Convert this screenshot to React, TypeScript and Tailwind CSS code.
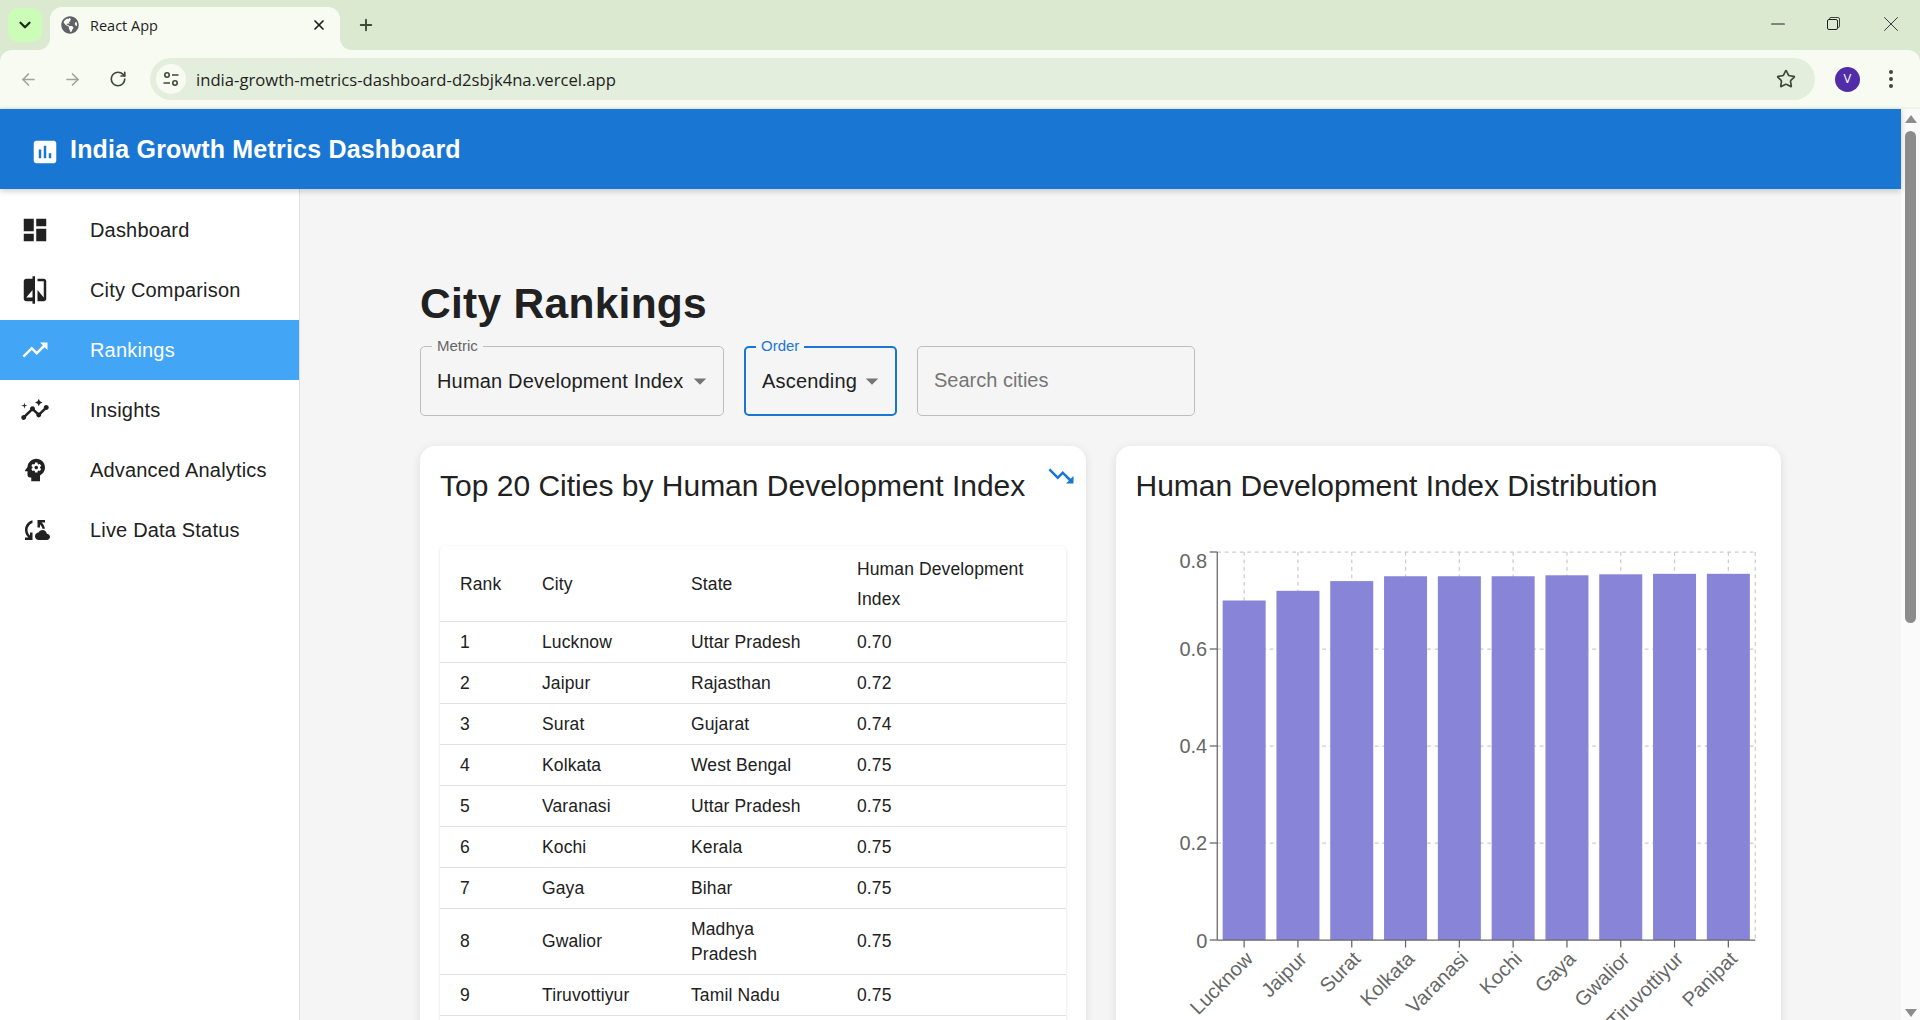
// City Rankings page inside the browser window frame
import { ArrowLeft, ArrowRight, ChevronDown, Minus, Plus, RotateCw, Star, X } from "lucide-react";
import { FaGlobeAmericas } from "react-icons/fa";

const navItems = [
  {
    label: "Dashboard",
    paths: ["M3 13h8V3H3v10zm0 8h8v-6H3v6zm10 0h8V11h-8v10zm0-18v6h8V3h-8z"],
  },
  {
    label: "City Comparison",
    paths: ["M10 3H5c-1.1 0-2 .9-2 2v14c0 1.1.9 2 2 2h5v2h2V1h-2v2zm0 15H5l5-6v6zm9-15h-5v2h5v13l-5-6v9h5c1.1 0 2-.9 2-2V5c0-1.1-.9-2-2-2z"],
  },
  {
    label: "Rankings",
    active: true,
    paths: ["m16 6 2.29 2.29-4.88 4.88-4-4L2 16.59 3.41 18l6-6 4 4 6.3-6.29L22 12V6z"],
  },
  {
    label: "Insights",
    paths: [
      "M21 8c-1.45 0-2.26 1.44-1.93 2.51l-3.55 3.56c-.3-.09-.74-.09-1.04 0l-2.55-2.55C12.27 10.45 11.46 9 10 9c-1.45 0-2.27 1.44-1.93 2.52l-4.56 4.55C2.44 15.74 1 16.55 1 18c0 1.1.9 2 2 2 1.45 0 2.26-1.44 1.93-2.51l4.55-4.56c.3.09.74.09 1.04 0l2.55 2.55C12.73 16.55 13.54 18 15 18c1.45 0 2.27-1.44 1.93-2.52l3.56-3.55c1.07.33 2.51-.48 2.51-1.93 0-1.1-.9-2-2-2z",
      "m15 9 .94-2.07L18 6l-2.06-.93L15 3l-.92 2.07L12 6l2.08.93zM3.5 11 4 9l2-.5L4 8l-.5-2L3 8l-2 .5L3 9z",
    ],
  },
  {
    label: "Advanced Analytics",
    paths: [
      "M13 8.57c-.79 0-1.43.64-1.43 1.43s.64 1.43 1.43 1.43 1.43-.64 1.43-1.43-.64-1.43-1.43-1.43z",
      "M13 3C9.25 3 6.2 5.94 6.02 9.64L4.1 12.2c-.25.33-.01.8.4.8H6v3c0 1.1.9 2 2 2h1v3h7v-4.68c2.36-1.12 4-3.53 4-6.32 0-3.87-3.13-7-7-7zm3 7c0 .13-.01.26-.02.39l.83.66c.08.06.1.16.05.25l-.8 1.39c-.05.09-.16.12-.24.09l-.99-.4c-.21.16-.43.29-.67.39L14 13.83c-.01.1-.1.17-.2.17h-1.6c-.1 0-.18-.07-.2-.17l-.15-1.06c-.25-.1-.47-.23-.68-.39l-.99.4c-.09.03-.2 0-.25-.09l-.8-1.39c-.05-.08-.03-.19.05-.25l.84-.66c-.01-.13-.02-.26-.02-.39s.02-.27.04-.39l-.85-.66c-.08-.06-.1-.16-.05-.26l.8-1.38c.05-.09.15-.12.24-.09l1 .4c.2-.15.43-.29.67-.39L12 6.17c.02-.1.1-.17.2-.17h1.6c.1 0 .18.07.2.17l.15 1.06c.24.1.46.23.67.39l1-.4c.09-.03.2 0 .24.09l.8 1.38c.05.09.03.2-.05.26l-.85.66c.03.12.04.25.04.39z",
    ],
  },
  {
    label: "Live Data Status",
    paths: [
      "M21.5 14.98c-.02 0-.03 0-.05.01C21.2 13.3 19.76 12 18 12c-1.4 0-2.6.83-3.16 2.02C13.26 14.1 12 15.4 12 17c0 1.66 1.34 3 3 3l6.5-.02c1.38 0 2.5-1.12 2.5-2.5s-1.12-2.5-2.5-2.5zM10 4.26v2.09C7.67 7.18 6 9.39 6 12c0 1.77.78 3.34 2 4.44V14h2v6H4v-2h2.73C5.06 16.54 4 14.4 4 12c0-3.73 2.55-6.85 6-7.74zM20 6h-2.73c1.43 1.26 2.41 3.01 2.66 5l-2.02.01C17.68 9.64 16.98 8.45 16 7.56V10h-2V4h6v2z",
    ],
  },
];

const rows = [
  ["1", "Lucknow", "Uttar Pradesh", "0.70"],
  ["2", "Jaipur", "Rajasthan", "0.72"],
  ["3", "Surat", "Gujarat", "0.74"],
  ["4", "Kolkata", "West Bengal", "0.75"],
  ["5", "Varanasi", "Uttar Pradesh", "0.75"],
  ["6", "Kochi", "Kerala", "0.75"],
  ["7", "Gaya", "Bihar", "0.75"],
  ["8", "Gwalior", "Madhya Pradesh", "0.75"],
  ["9", "Tiruvottiyur", "Tamil Nadu", "0.75"],
  ["10", "Panipat", "Haryana", "0.76"],
];

const bars = [
  { city: "Lucknow", value: 0.7 },
  { city: "Jaipur", value: 0.72 },
  { city: "Surat", value: 0.74 },
  { city: "Kolkata", value: 0.75 },
  { city: "Varanasi", value: 0.75 },
  { city: "Kochi", value: 0.75 },
  { city: "Gaya", value: 0.752 },
  { city: "Gwalior", value: 0.754 },
  { city: "Tiruvottiyur", value: 0.755 },
  { city: "Panipat", value: 0.755 },
];

function MuiIcon({ paths, className }: { paths: string[]; className?: string }) {
  return (
    <svg viewBox="0 0 24 24" fill="currentColor" className={className}>
      {paths.map((d) => (
        <path key={d} d={d} />
      ))}
    </svg>
  );
}

function BrowserFrame() {
  return (
    <div className="h-[109px] shrink-0 bg-[#dbe9d0] font-['Open_Sans',sans-serif] text-[#1f1f1f]">
      {/* Tab strip */}
      <div className="flex h-[50px] items-start">
        <div className="ml-2 mt-2 flex h-[34px] w-[34px] items-center justify-center rounded-[10px] bg-[#ccfdb8]">
          <ChevronDown className="h-[18px] w-[18px] text-[#1f2a1a]" strokeWidth={3} />
        </div>
        <div className="relative ml-2 mt-[7px] flex h-[43px] w-[290px] items-center rounded-t-[12px] bg-[#f8fbf2] pb-[7px] pl-[11px] pr-[13px]">
          <svg viewBox="0 0 12 12" className="absolute bottom-0 left-[-12px] h-3 w-3 text-[#f8fbf2]" fill="currentColor">
            <path d="M12 0v12H0C7 12 12 7 12 0z" />
          </svg>
          <svg viewBox="0 0 12 12" className="absolute bottom-0 right-[-12px] h-3 w-3 text-[#f8fbf2]" fill="currentColor">
            <path d="M0 0v12h12C5 12 0 7 0 0z" />
          </svg>
          <FaGlobeAmericas className="h-[18px] w-[18px] text-[#5f6368]" />
          <span className="ml-[11px] flex-1 pt-[2px] text-[14.5px] leading-none">React App</span>
          <X className="h-[16px] w-[16px]" strokeWidth={2.6} />
        </div>
        <Plus className="ml-[17px] mt-[16px] h-[18px] w-[18px] text-[#3c4a36]" strokeWidth={2.5} />
        <div className="ml-auto flex h-[47px] items-center">
          <Minus className="h-[22px] w-[22px] text-[#222]" strokeWidth={1.1} />
          <div className="relative ml-[38px] h-[13px] w-[13px]">
            <div className="absolute right-0 top-0 h-[11px] w-[11px] rounded-[2px] border border-[#444]" />
            <div className="absolute bottom-0 left-0 h-[11px] w-[11px] rounded-[2px] border border-[#222] bg-[#dbe9d0]" />
          </div>
          <X className="ml-[38px] mr-[16px] h-[26px] w-[26px] text-[#333]" strokeWidth={0.9} />
        </div>
      </div>
      {/* Toolbar */}
      <div className="flex h-[57px] items-center rounded-t-[12px] bg-[#f8fbf2] pt-[1px]">
        <ArrowLeft className="ml-[19px] h-[19px] w-[19px] text-[#9ea59a]" strokeWidth={2} />
        <ArrowRight className="ml-[25px] h-[19px] w-[19px] text-[#9ea59a]" strokeWidth={2} />
        <RotateCw className="ml-[27px] h-[18px] w-[18px] text-[#3c4a36]" strokeWidth={2.2} />
        <div className="ml-[23px] flex h-[42px] w-[1665px] items-center rounded-full bg-[#e4eedc] pl-[6px] pr-[19px]">
          <div className="flex h-[30px] w-[30px] items-center justify-center rounded-full bg-[#f8fbf2]">
            <svg viewBox="0 0 18 18" className="h-[18px] w-[18px]" fill="none" stroke="#3c4a36" strokeWidth="1.6">
              <circle cx="5" cy="5" r="2.2" />
              <path d="M10 5h6.5M1.5 13H8" />
              <circle cx="13" cy="13" r="2.2" />
            </svg>
          </div>
          <span className="ml-[10px] flex-1 pt-[2px] text-[16.65px] leading-none">india-growth-metrics-dashboard-d2sbjk4na.vercel.app</span>
          <Star className="h-[20px] w-[20px] text-[#3c4a36]" strokeWidth={2} />
        </div>
        <div className="ml-[20px] flex h-[25px] w-[25px] items-center justify-center rounded-full bg-[#512da8] text-[13px] text-white">V</div>
        <div className="ml-[29px] flex flex-col gap-[3.5px]">
          <span className="h-[3.5px] w-[3.5px] rounded-full bg-[#3c4a36]" />
          <span className="h-[3.5px] w-[3.5px] rounded-full bg-[#3c4a36]" />
          <span className="h-[3.5px] w-[3.5px] rounded-full bg-[#3c4a36]" />
        </div>
      </div>
      <div className="h-[2px] bg-[#f1f3e8]" />
    </div>
  );
}

function Sidebar() {
  return (
    <aside className="w-[300px] shrink-0 border-r border-[#e0e0e0] bg-white pt-[11px]">
      {navItems.map((item) => (
        <div
          key={item.label}
          className={`flex h-[60px] items-center pl-5 ${item.active ? "bg-[#42a5f5] text-white" : "text-[#212121]"}`}
        >
          <MuiIcon paths={item.paths} className="h-[30px] w-[30px]" />
          <span className="ml-[40px] text-[20px] leading-none tracking-[0.18px]">{item.label}</span>
        </div>
      ))}
    </aside>
  );
}

function SelectBox({ label, value, focused, width }: { label: string; value: string; focused?: boolean; width: string }) {
  return (
    <div
      className={`relative flex h-[70px] items-center rounded-[5px] ${width} ${
        focused ? "border-2 border-[#1976d2] pl-[16px]" : "border border-[#bdbdbd] pl-[16px]"
      }`}
    >
      <span
        className={`absolute bg-[#f5f5f5] px-[5px] text-[15px] leading-[17px] ${
          focused ? "left-[10px] top-[-11px] text-[#1976d2]" : "left-[11px] top-[-10px] text-[#666]"
        }`}
      >
        {label}
      </span>
      <span className="text-[20px] leading-none tracking-[0.18px] text-[#212121]">{value}</span>
      <svg viewBox="0 0 24 24" className={`h-[30px] w-[30px] text-[#757575] ${focused ? "" : "ml-[1px]"}`} fill="currentColor">
        <path d="M7 10l5 5 5-5z" />
      </svg>
    </div>
  );
}

function RankTable() {
  return (
    <div className="overflow-hidden rounded-[5px] bg-white shadow-[0_1px_3px_rgba(0,0,0,0.14)]">
      <table className="w-full table-fixed border-collapse text-left text-[17.5px] tracking-[0.12px] text-[#212121]">
        <colgroup>
          <col className="w-[82px]" />
          <col className="w-[149px]" />
          <col className="w-[166px]" />
          <col />
        </colgroup>
        <thead>
          <tr className="border-b border-[#e0e0e0]">
            <th className="px-5 py-[7.5px] font-normal leading-[30px]">Rank</th>
            <th className="px-5 py-[7.5px] font-normal leading-[30px]">City</th>
            <th className="px-5 py-[7.5px] font-normal leading-[30px]">State</th>
            <th className="px-5 py-[7.5px] font-normal leading-[30px]">Human Development Index</th>
          </tr>
        </thead>
        <tbody>
          {rows.map((row) => (
            <tr key={row[0]} className="border-b border-[#e0e0e0]">
              {row.map((cell, i) => (
                <td key={i} className="px-5 py-[7.5px] leading-[25px]">
                  {cell}
                </td>
              ))}
            </tr>
          ))}
        </tbody>
      </table>
    </div>
  );
}

function DistributionChart() {
  const left = 81.25;
  const right = 619.25;
  const top = 6;
  const bottom = 394;
  const band = (right - left) / bars.length;
  const yOf = (v: number) => bottom - (v / 0.8) * (bottom - top);
  const ticks = [0, 0.2, 0.4, 0.6, 0.8];

  return (
    <svg width="625" height="560" className="overflow-visible font-['Liberation_Sans',sans-serif]">
      <g stroke="#ccc" strokeWidth="1.25" strokeDasharray="3.75 3.75">
        {ticks.slice(1).map((t) => (
          <line key={t} x1={left} x2={right} y1={yOf(t)} y2={yOf(t)} />
        ))}
        <line x1={right} x2={right} y1={top} y2={bottom} />
        {bars.map((b, i) => (
          <line key={b.city} x1={left + band * (i + 0.5)} x2={left + band * (i + 0.5)} y1={top} y2={bottom} />
        ))}
      </g>
      {bars.map((b, i) => (
        <rect key={b.city} x={left + band * i + 5.4} y={yOf(b.value)} width={band - 10.8} height={bottom - yOf(b.value)} fill="#8884d8" />
      ))}
      <g stroke="#666" strokeWidth="1.25">
        <line x1={left} x2={left} y1={top} y2={bottom} />
        <line x1={left} x2={right} y1={bottom} y2={bottom} />
        {ticks.map((t) => (
          <line key={t} x1={left - 7.5} x2={left} y1={yOf(t)} y2={yOf(t)} />
        ))}
        {bars.map((b, i) => (
          <line key={b.city} x1={left + band * (i + 0.5)} x2={left + band * (i + 0.5)} y1={bottom} y2={bottom + 7.5} />
        ))}
      </g>
      <g fill="#666" fontSize="20">
        {ticks.map((t) => (
          <text key={t} x={left - 10} y={yOf(t) + (t === 0.8 ? 8.5 : t === 0 ? 1 : 0)} textAnchor="end" dy="0.355em">
            {t}
          </text>
        ))}
        {bars.map((b, i) => {
          const x = left + band * (i + 0.5);
          const y = bottom + 10;
          return (
            <text key={b.city} x={x} y={y} dy="0.71em" textAnchor="end" transform={`rotate(-45 ${x} ${y})`}>
              {b.city}
            </text>
          );
        })}
      </g>
    </svg>
  );
}

function Scrollbar() {
  return (
    <div className="flex w-[19px] shrink-0 flex-col items-center bg-[#fafafa]">
      <div className="mt-[6px] h-0 w-0 border-x-[6px] border-b-[8px] border-x-transparent border-b-[#8c8c8c]" />
      <div className="mt-[8px] h-[492px] w-[11px] rounded-full bg-[#8c8c8c]" />
      <div className="mt-auto mb-[3px] h-0 w-0 border-x-[6px] border-t-[8px] border-x-transparent border-t-[#8c8c8c]" />
    </div>
  );
}

export default function App() {
  return (
    <div className="flex h-[1020px] w-[1920px] flex-col overflow-hidden font-['Liberation_Sans',Arial,sans-serif]">
      <BrowserFrame />
      <div className="flex min-h-0 flex-1">
        <div className="flex min-w-0 flex-1 flex-col">
          <header className="relative z-10 flex h-[80px] shrink-0 items-center bg-[#1976d2] pl-[30px] text-white shadow-[0_2px_6px_rgba(0,0,0,0.2)]">
            <MuiIcon
              paths={["M19 3H5c-1.1 0-2 .9-2 2v14c0 1.1.9 2 2 2h14c1.1 0 2-.9 2-2V5c0-1.1-.9-2-2-2zM9 17H7v-7h2v7zm4 0h-2V7h2v10zm4 0h-2v-4h2v4z"]}
              className="mt-[5px] h-[30px] w-[30px]"
            />
            <h1 className="ml-[10px] text-[25px] font-bold leading-none tracking-[0.2px]">India Growth Metrics Dashboard</h1>
          </header>
          <div className="flex min-h-0 flex-1">
            <Sidebar />
            <main className="min-w-0 flex-1 bg-[#f5f5f5] px-[120px] pt-[89px]">
              <h2 className="text-[42.5px] font-bold leading-[52px] tracking-[0.28px] text-[#212121]">City Rankings</h2>
              <div className="mt-[16px] flex gap-5">
                <SelectBox label="Metric" value="Human Development Index" width="w-[304px]" />
                <SelectBox label="Order" value="Ascending" focused width="w-[153px]" />
                <input
                  placeholder="Search cities"
                  className="h-[70px] w-[278px] rounded-[5px] border border-[#bdbdbd] bg-transparent pb-[2px] pl-[16px] text-[20px] placeholder:text-[#757575]"
                />
              </div>
              <div className="mt-[30px] grid grid-cols-2 gap-[30px]">
                <section className="relative rounded-[15px] bg-white p-5 shadow-[0_2px_10px_rgba(0,0,0,0.1)]">
                  <h3 className="mb-[40px] whitespace-nowrap text-[30px] leading-[40px] text-[#212121]">
                    Top 20 Cities by Human Development Index
                  </h3>
                  <MuiIcon
                    paths={["m16 18 2.29-2.29-4.88-4.88-4 4L2 7.41 3.41 6l6 6 4-4 6.3 6.29L22 12v6z"]}
                    className="absolute right-[10px] top-[15px] h-[30px] w-[30px] text-[#1976d2]"
                  />
                  <RankTable />
                </section>
                <section className="rounded-[15px] bg-white p-5 shadow-[0_2px_10px_rgba(0,0,0,0.1)]">
                  <h3 className="mb-[40px] whitespace-nowrap text-[30px] leading-[40px] text-[#212121]">
                    Human Development Index Distribution
                  </h3>
                  <DistributionChart />
                </section>
              </div>
            </main>
          </div>
        </div>
        <Scrollbar />
      </div>
    </div>
  );
}
